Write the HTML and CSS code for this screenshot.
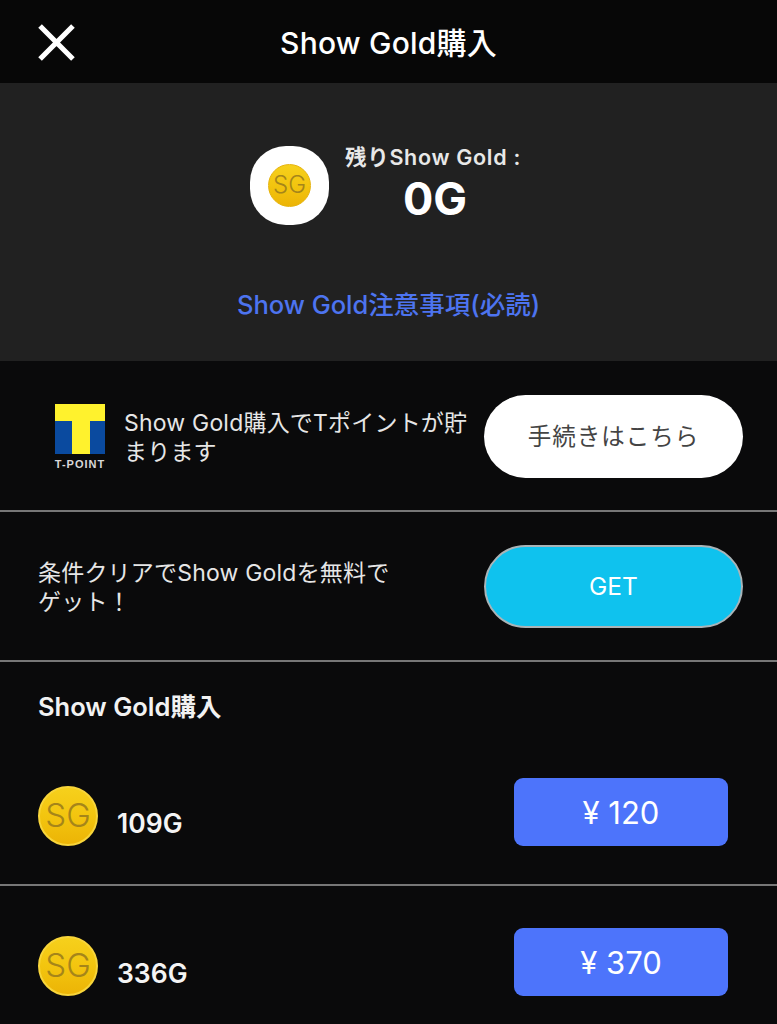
FILE: index.html
```html
<!DOCTYPE html>
<html lang="ja">
<head>
<meta charset="UTF-8">
<title>Show Gold購入</title>
<meta name="viewport" content="width=device-width, initial-scale=1.0">
<link rel="stylesheet" href="styles.css">
</head>
<body>

<header class="top-bar">
  <svg class="close-icon" viewBox="0 0 36 36" aria-label="閉じる">
    <path d="M2 2 L34 34 M34 2 L2 34" stroke="#fff" stroke-width="5" fill="none"/>
  </svg>
  <h1>Show Gold購入</h1>
</header>

<section class="summary">
  <div class="balance">
    <div class="coin-tile">
      <div class="coin coin-small">SG</div>
    </div>
    <div class="balance-text">
      <div class="balance-label">残りShow Gold :</div>
      <div class="balance-value">0G</div>
    </div>
  </div>
  <a class="notice-link" href="#">Show Gold注意事項(必読)</a>
</section>

<section class="promo-row promo-row-first">
  <div class="tpoint">
    <svg class="tpoint-mark" viewBox="0 0 50 50">
      <rect width="50" height="50" fill="#0a4a9f"/>
      <path d="M0 0 H50 V17 H35 V50 H17 V17 H0 Z" fill="#fff22d"/>
    </svg>
    <span class="tpoint-name">T-POINT</span>
  </div>
  <p class="promo-text promo-text-tpoint">Show Gold購入でTポイントが貯まります</p>
  <a class="pill pill-white" href="#">手続きはこちら</a>
</section>

<section class="promo-row">
  <p class="promo-text promo-text-free">条件クリアでShow Goldを無料でゲット！</p>
  <a class="pill pill-blue" href="#">GET</a>
</section>

<section class="shop">
  <h2>Show Gold購入</h2>
  <div class="shop-row">
    <div class="coin">SG</div>
    <span class="amount">109G</span>
    <a class="price" href="#">¥ 120</a>
  </div>
  <div class="shop-row">
    <div class="coin">SG</div>
    <span class="amount">336G</span>
    <a class="price" href="#">¥ 370</a>
  </div>
</section>

</body>
</html>
```

FILE: styles.css
```css
body {
  font-family: Inter, "Noto Sans CJK JP", sans-serif;
  background-color: #0a0a0b;
  color: #fff;
  margin: 0;
  height: 1024px;
  overflow: hidden;
}

a {
  text-decoration: none;
}

.top-bar {
  background-color: #070707;
  height: 83px;
  display: flex;
  align-items: center;
  justify-content: center;
  position: relative;
}

.top-bar h1 {
  font-size: 30px;
  font-weight: 500;
  letter-spacing: 0.2px;
  margin: 0 0 2px;
}

.close-icon {
  position: absolute;
  left: 38px;
  top: 24px;
  width: 37px;
  height: 37px;
}

.summary {
  background-color: #212121;
  height: 278px;
  box-sizing: border-box;
  padding-top: 62px;
  display: flex;
  flex-direction: column;
  align-items: center;
}

.balance {
  display: flex;
  align-items: center;
  gap: 16px;
  margin-right: 6px;
}

.coin-tile {
  width: 79px;
  height: 79px;
  background: #fff;
  border-radius: 36px;
  display: flex;
  align-items: center;
  justify-content: center;
}

.coin {
  width: 60px;
  height: 60px;
  flex-shrink: 0;
  border-radius: 50%;
  box-sizing: border-box;
  border: 2px solid #f8d53a;
  background: linear-gradient(180deg, #f6d01c 0%, #f3c50f 50%, #ecb406 100%);
  color: #a5851a;
  font-size: 33px;
  font-weight: 300;
  line-height: 54px;
  text-align: center;
}

.coin-small {
  width: 43px;
  height: 43px;
  border-width: 1px;
  border-color: #e6b30c;
  font-size: 24px;
  line-height: 40px;
}

.balance-label {
  font-size: 21.5px;
  font-weight: 600;
  line-height: 24px;
  letter-spacing: 0.7px;
  color: #e8e8e8;
  white-space: nowrap;
}

.balance-value {
  font-size: 45px;
  font-weight: 700;
  line-height: 54px;
  margin-top: 3px;
  text-align: center;
  padding-left: 4px;
}

.notice-link {
  margin-top: 58px;
  font-size: 25.5px;
  font-weight: 500;
  color: #4d74f0;
}

.promo-row {
  height: 150px;
  box-sizing: border-box;
  border-bottom: 2px solid #777;
  padding: 0 34px 0 38px;
  display: flex;
  align-items: center;
}

.promo-row-first {
  height: 151px;
}

.promo-text {
  margin: 0;
  padding-top: 4px;
  font-size: 23px;
  line-height: 29px;
  letter-spacing: 0.2px;
  color: #e6e6e6;
}

.promo-text-tpoint {
  width: 348px;
  margin-left: 19px;
  margin-right: 12px;
}

.promo-text-free {
  width: 360px;
  margin-right: 86px;
}

.tpoint {
  width: 50px;
  margin-left: 17px;
  margin-top: 3px;
  display: flex;
  flex-direction: column;
  align-items: center;
}

.tpoint-mark {
  width: 50px;
  height: 50px;
  display: block;
}

.tpoint-name {
  font-family: "Liberation Sans", sans-serif;
  font-size: 11px;
  font-weight: 700;
  letter-spacing: 1px;
  color: #d8d8d8;
  margin-top: 4px;
  white-space: nowrap;
}

.pill {
  width: 259px;
  height: 83px;
  box-sizing: border-box;
  border-radius: 42px;
  display: flex;
  align-items: center;
  justify-content: center;
  font-size: 23.5px;
  flex-shrink: 0;
}

.pill-white {
  background: #fff;
  color: #444;
  letter-spacing: 1px;
  margin-top: 2px;
  padding-bottom: 3px;
}

.pill-blue {
  background: #0fc2ee;
  border: 2px solid #a9b4b8;
  color: #fff;
  font-size: 24.5px;
}

.shop h2 {
  font-size: 25.5px;
  font-weight: 600;
  line-height: 32px;
  margin: 0;
  padding: 29px 0 13px 38px;
  color: #f2f2f2;
}

.shop-row {
  height: 150px;
  box-sizing: border-box;
  border-bottom: 2px solid #777;
  padding: 42px 49px 0 38px;
  display: flex;
  align-items: flex-start;
}

.shop-row .coin {
  margin-top: 8px;
}

.amount {
  font-size: 26.5px;
  font-weight: 600;
  line-height: 32px;
  margin-left: 19px;
  margin-top: 29px;
  color: #f4f4f4;
}

.price {
  margin-left: auto;
  width: 214px;
  height: 68px;
  background: #4d74fb;
  border-radius: 9px;
  display: flex;
  align-items: center;
  justify-content: center;
  font-size: 31px;
  color: #fff;
}
```
